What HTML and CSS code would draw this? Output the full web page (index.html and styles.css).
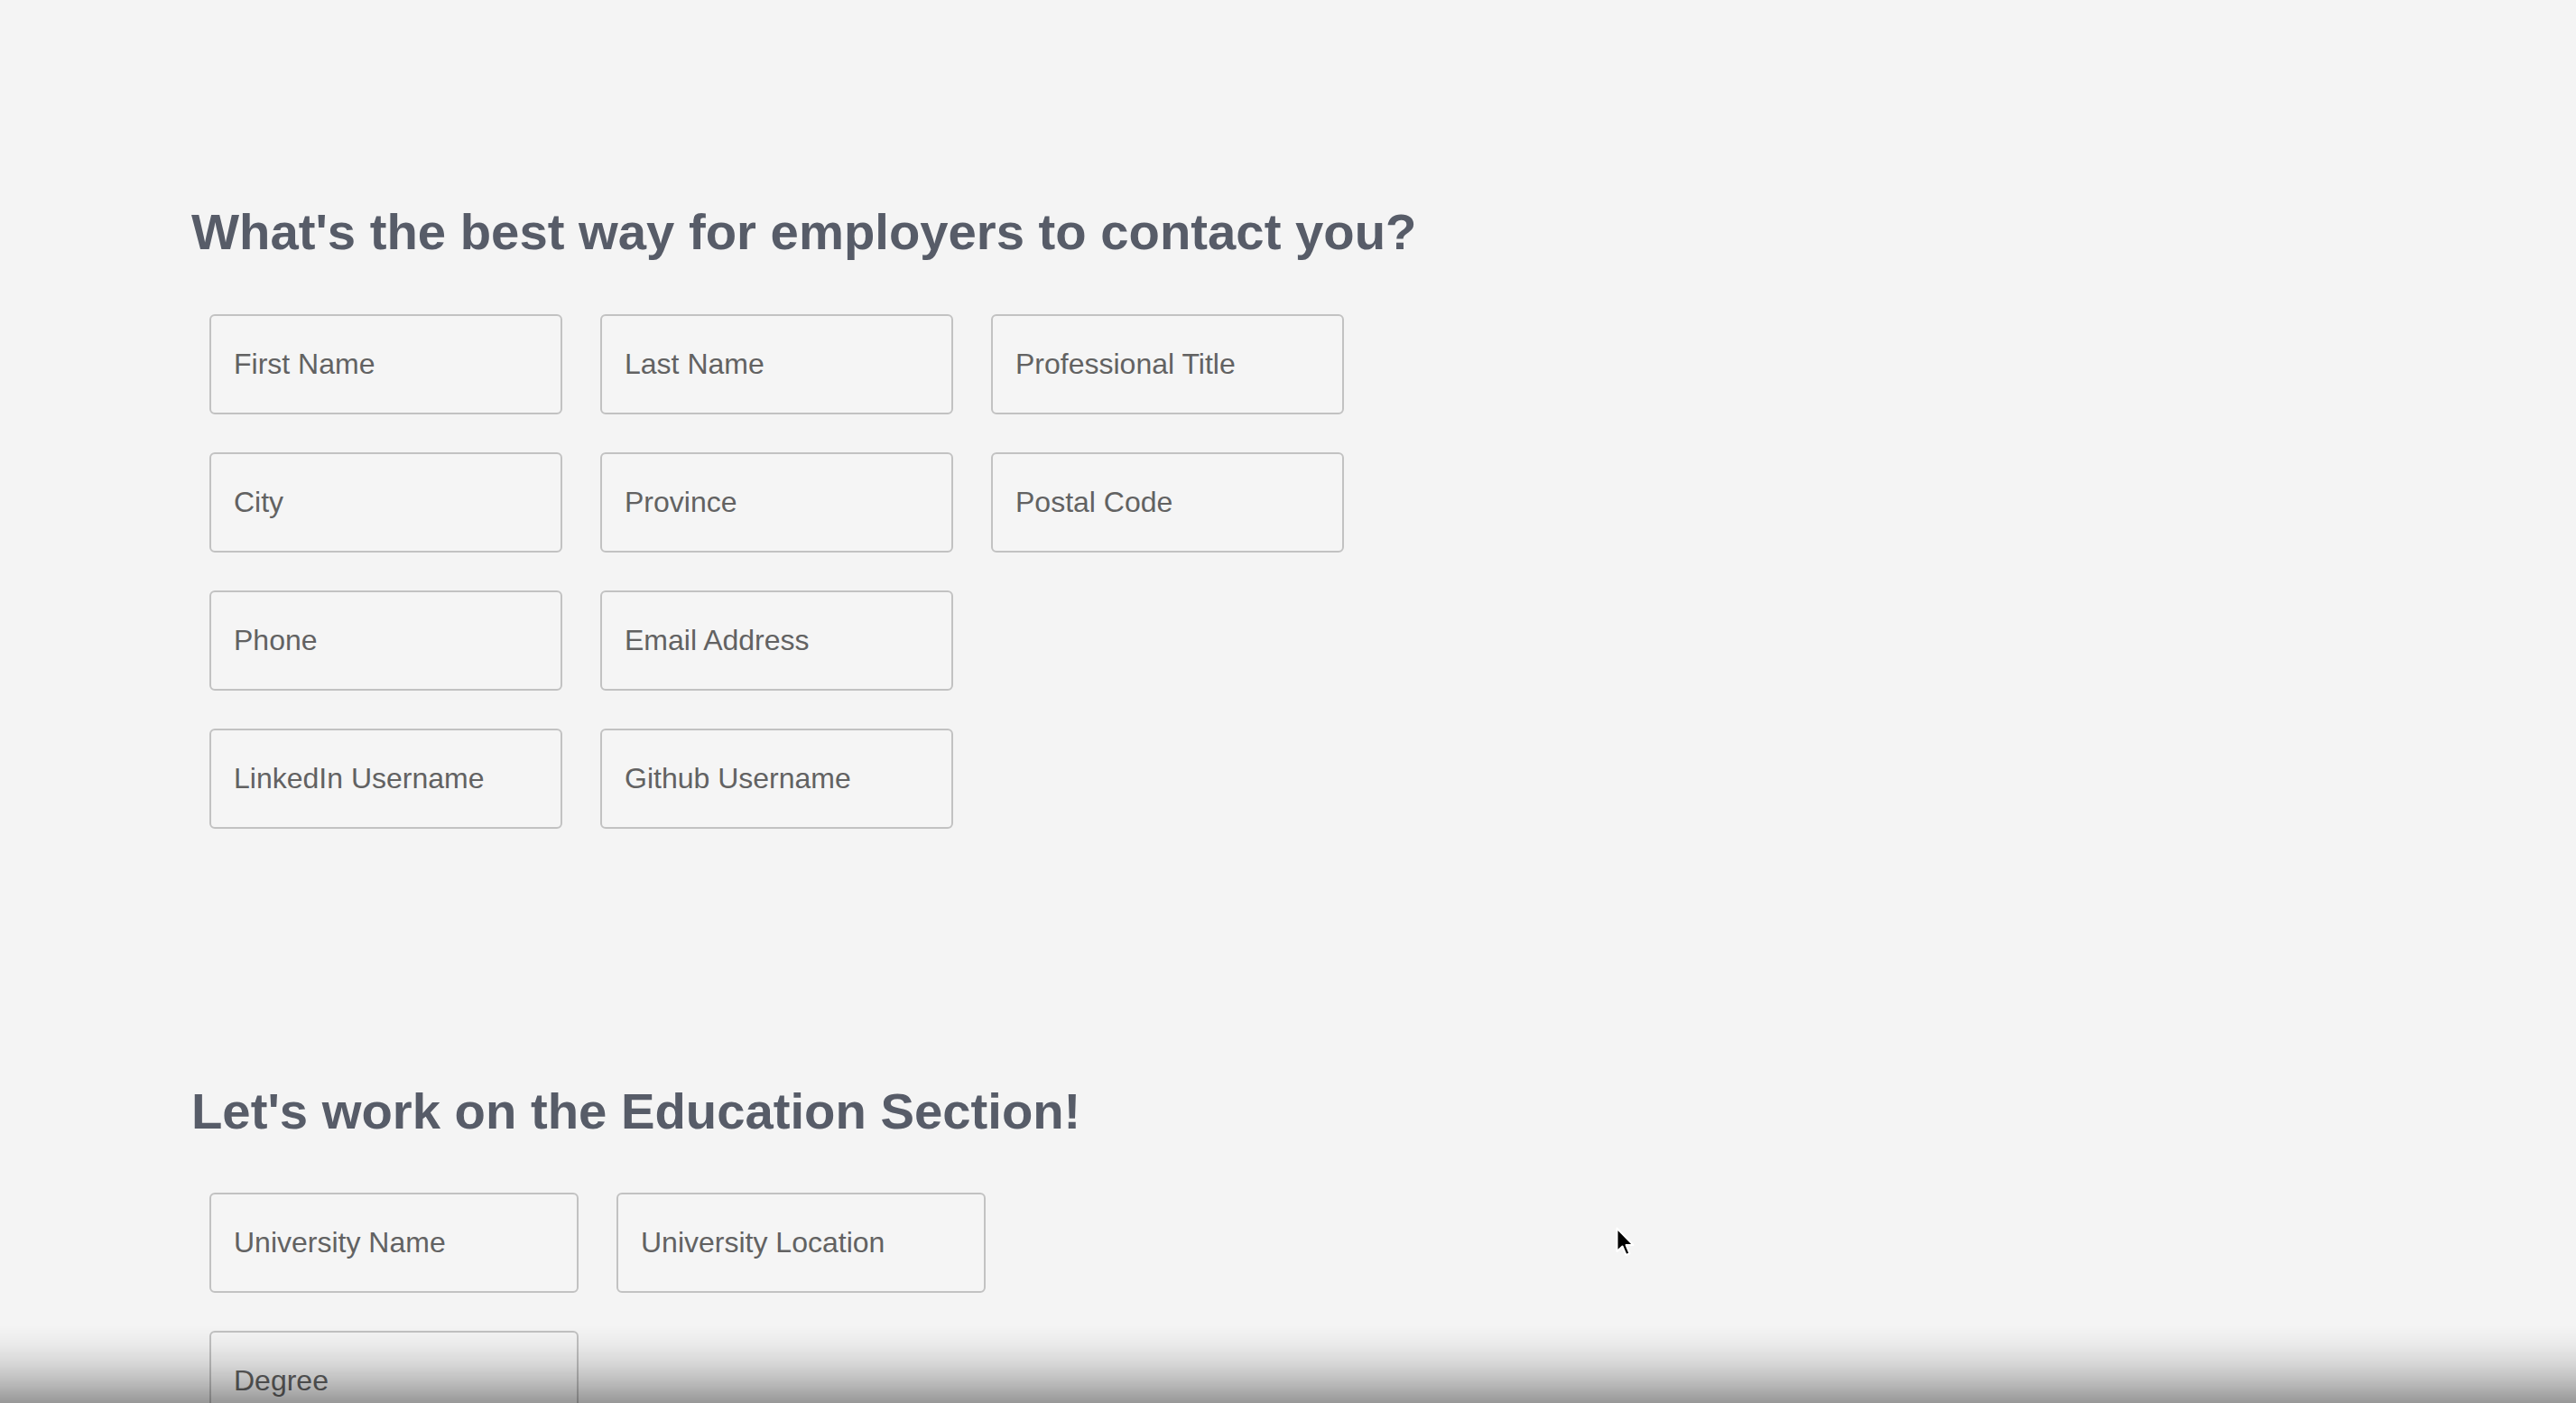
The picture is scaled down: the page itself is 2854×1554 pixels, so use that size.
FILE: index.html
```html
<!DOCTYPE html>
<html lang="en">
<head>
<meta charset="utf-8">
<title>Resume Builder</title>
<link rel="stylesheet" href="styles.css">
</head>
<body>
<main class="page">
  <section class="section section-contact">
    <h2 class="section-title">What's the best way for employers to contact you?</h2>
    <div class="fields">
      <div class="row">
        <input class="field" type="text" placeholder="First Name">
        <input class="field" type="text" placeholder="Last Name">
        <input class="field" type="text" placeholder="Professional Title">
      </div>
      <div class="row">
        <input class="field" type="text" placeholder="City">
        <input class="field" type="text" placeholder="Province">
        <input class="field" type="text" placeholder="Postal Code">
      </div>
      <div class="row">
        <input class="field" type="text" placeholder="Phone">
        <input class="field" type="text" placeholder="Email Address">
      </div>
      <div class="row">
        <input class="field" type="text" placeholder="LinkedIn Username">
        <input class="field" type="text" placeholder="Github Username">
      </div>
    </div>
  </section>

  <section class="section section-education">
    <h2 class="section-title">Let's work on the Education Section!</h2>
    <div class="fields">
      <div class="row">
        <input class="field field-wide" type="text" placeholder="University Name">
        <input class="field field-wide" type="text" placeholder="University Location">
      </div>
      <div class="row">
        <input class="field field-wide" type="text" placeholder="Degree">
      </div>
    </div>
  </section>
</main>

<div class="bottom-shade"></div>

<svg class="cursor" width="24" height="36" viewBox="0 0 24 36" aria-hidden="true">
  <path d="M1.5 1.5 L1.5 27 L7.5 21.5 L11.5 31 L15.5 29.3 L11.6 20 L19.5 20 Z" fill="#000" stroke="#fff" stroke-width="2" stroke-linejoin="round"/>
</svg>
</body>
</html>
```

FILE: styles.css
```css
html, body {
  margin: 0;
  padding: 0;
  height: 100%;
  overflow: hidden;
  background: #f4f4f4;
}

body {
  font-family: "Liberation Sans", Arial, Helvetica, sans-serif;
}

.page {
  padding: 224px 0 0 212px;
}

.section-title {
  margin: 0;
  font-size: 56.25px;
  line-height: 66px;
  font-weight: 700;
  color: #575c68;
  white-space: nowrap;
}

.section-education {
  margin-top: 280px;
}

.fields {
  margin: 58px 0 0 20px;
  display: flex;
  flex-direction: column;
  gap: 42px;
}

.section-education .fields {
  margin-top: 57px;
}

.row {
  display: flex;
  gap: 42px;
}

.field {
  box-sizing: border-box;
  width: 391px;
  height: 111px;
  margin: 0;
  padding: 0 25px;
  border: 2px solid #c2c2c2;
  border-radius: 6px;
  background: #f5f5f5;
  font-family: "Liberation Sans", Arial, Helvetica, sans-serif;
  font-size: 32px;
  color: #5f5f5f;
  outline: none;
}

.field-wide {
  width: 409px;
}

.field::placeholder {
  color: #626262;
  opacity: 1;
}

.bottom-shade {
  position: fixed;
  left: 0;
  right: 0;
  bottom: 0;
  height: 86px;
  pointer-events: none;
  background: linear-gradient(to bottom,
    rgba(0, 0, 0, 0) 0%,
    rgba(0, 0, 0, 0.04) 25%,
    rgba(0, 0, 0, 0.12) 50%,
    rgba(0, 0, 0, 0.24) 75%,
    rgba(0, 0, 0, 0.38) 100%);
}

.cursor {
  position: fixed;
  left: 1790px;
  top: 1359px;
}
```
